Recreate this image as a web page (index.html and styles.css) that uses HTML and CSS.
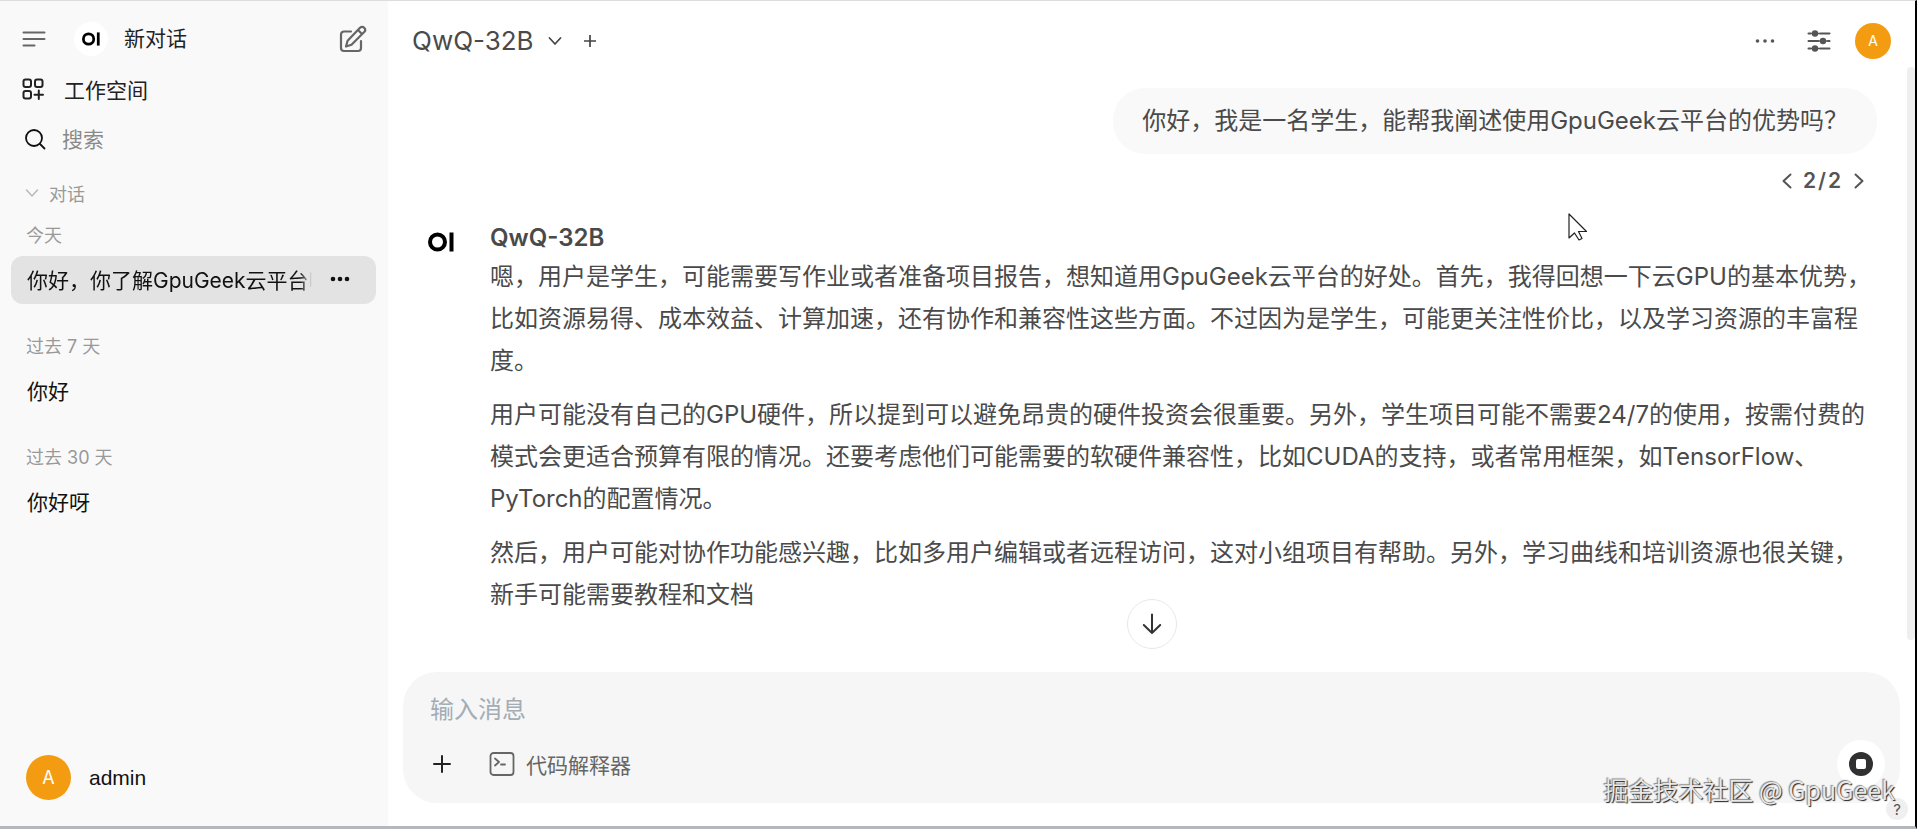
FILE: index.html
```html
<!DOCTYPE html>
<html lang="zh-CN">
<head>
  <meta charset="UTF-8" />
  <meta name="viewport" content="width=device-width, initial-scale=1" />
  <title>QwQ-32B</title>
  <link rel="stylesheet" href="styles.css">
</head>
<body>
  <div class="app">
    <aside class="sidebar">
      <div class="side-top">
        <button class="icon-btn" aria-label="菜单">
          <svg width="24" height="24" viewBox="0 0 24 24" fill="none" stroke="#666" stroke-width="2" stroke-linecap="round"><path d="M1.500 5.500h21M1.500 12h21M1.500 18.500h11"/></svg>
        </button>
        <a class="new-chat" href="#">
          <span class="logo-round">
            <svg width="18" height="14" viewBox="0 0 26 20" fill="none" stroke="#000" stroke-width="4"><circle cx="9.500" cy="10" r="7.500"/><path d="M23.500 0.500v19"/></svg>
          </span>
          <span>新对话</span>
        </a>
        <button class="icon-btn" aria-label="编辑">
          <svg width="28" height="28" viewBox="0 0 28 28" fill="none" stroke="#666" stroke-width="2.200" stroke-linecap="round" stroke-linejoin="round"><path d="M12 6.500H5a3 3 0 0 0-3 3V23a3 3 0 0 0 3 3h14a3 3 0 0 0 3-3v-7"/><path d="M21 2.800a2.900 2.900 0 0 1 4.200 4.200L12.500 19.700 7 21.500l1.600-5.800zM19 5l4 4"/></svg>
        </button>
      </div>

      <a class="side-row" href="#">
        <svg width="22" height="22" viewBox="0 0 22 22" fill="none" stroke="#222" stroke-width="2" stroke-linecap="round"><rect x="1.500" y="1.500" width="7.500" height="7.500" rx="2"/><rect x="13" y="1.500" width="7.500" height="7.500" rx="2"/><rect x="1.500" y="13" width="7.500" height="7.500" rx="2"/><path d="M16.800 12.500v8.500M12.500 16.800h8.500"/></svg>
        <span>工作空间</span>
      </a>
      <label class="side-row search">
        <svg width="22" height="22" viewBox="0 0 22 22" fill="none" stroke="#111" stroke-width="1.800" stroke-linecap="round"><circle cx="10" cy="10" r="8"/><path d="M16 16l4.500 4.500"/></svg>
        <input type="text" placeholder="搜索" aria-label="搜索">
      </label>

      <button class="folder">
        <svg width="14" height="14" viewBox="0 0 14 14" fill="none" stroke="#bbb" stroke-width="1.600" stroke-linecap="round" stroke-linejoin="round"><path d="M1.500 4L7 10l5.500-6"/></svg>
        <span>对话</span>
      </button>

      <nav class="history">
        <section>
          <h3>今天</h3>
          <div class="chat-item active">
            <a href="#">你好，你了解GpuGeek云平台吗</a>
            <button class="icon-btn" aria-label="更多">
              <svg width="20" height="20" viewBox="0 0 20 20" fill="#111"><circle cx="3" cy="10" r="2.300"/><circle cx="10" cy="10" r="2.300"/><circle cx="17" cy="10" r="2.300"/></svg>
            </button>
          </div>
        </section>
        <section>
          <h3>过去 7 天</h3>
          <div class="chat-item"><a href="#">你好</a></div>
        </section>
        <section>
          <h3>过去 30 天</h3>
          <div class="chat-item"><a href="#">你好呀</a></div>
        </section>
      </nav>

      <button class="user">
        <span class="avatar avatar-lg">A</span>
        <span>admin</span>
      </button>
    </aside>

    <main class="main">
      <header class="topbar">
        <button class="model">
          <span>QwQ-32B</span>
          <svg width="14" height="14" viewBox="0 0 14 14" fill="none" stroke="#444" stroke-width="1.700" stroke-linecap="round" stroke-linejoin="round"><path d="M1.500 4L7 10l5.500-6"/></svg>
        </button>
        <button class="icon-btn" aria-label="添加模型">
          <svg width="14" height="14" viewBox="0 0 14 14" stroke="#444" stroke-width="1.700"><path d="M7 1v12M1 7h12"/></svg>
        </button>
        <div class="actions">
          <button class="icon-btn" aria-label="更多">
            <svg width="20" height="20" viewBox="0 0 20 20" fill="#555"><circle cx="2.500" cy="10" r="1.800"/><circle cx="10" cy="10" r="1.800"/><circle cx="17.500" cy="10" r="1.800"/></svg>
          </button>
          <button class="icon-btn" aria-label="对话设置">
            <svg width="24" height="24" viewBox="0 0 24 24" fill="#555" stroke="#555" stroke-width="2" stroke-linecap="round"><path d="M1.500 4.500h2M13.500 4.500h9M1.500 12h9.500M21 12h1.500M1.500 19.500h2M13.500 19.500h9"/><path d="M4 4.500h9M11 12h10M4 19.500h9" stroke-width="1.400"/><circle cx="8" cy="4.500" r="2.200"/><circle cx="16" cy="12" r="2.200"/><circle cx="8" cy="19.500" r="2.200"/></svg>
          </button>
          <button class="avatar" aria-label="用户菜单">A</button>
        </div>
      </header>

      <div class="messages">
        <div class="user-msg">你好，我是一名学生，能帮我阐述使用GpuGeek云平台的优势吗？</div>
        <div class="pager">
          <button class="icon-btn" aria-label="上一条">
            <svg width="12" height="18" viewBox="0 0 12 18" fill="none" stroke="#555" stroke-width="2" stroke-linecap="round" stroke-linejoin="round"><path d="M9.500 2.500L2.500 9l7 6.500"/></svg>
          </button>
          <span>2/2</span>
          <button class="icon-btn" aria-label="下一条">
            <svg width="12" height="18" viewBox="0 0 12 18" fill="none" stroke="#555" stroke-width="2" stroke-linecap="round" stroke-linejoin="round"><path d="M2.500 2.500l7 6.500-7 6.500"/></svg>
          </button>
        </div>

        <article class="bot-msg">
          <svg class="bot-logo" width="26" height="20" viewBox="0 0 26 20" fill="none" stroke="#000" stroke-width="4"><circle cx="9.500" cy="10" r="7.500"/><path d="M23.500 0.500v19"/></svg>
          <div class="bot-body">
            <h2>QwQ-32B</h2>
            <p>嗯，用户是学生，可能需要写作业或者准备项目报告，想知道用GpuGeek云平台的好处。首先，我得回想一下云GPU的基本优势，比如资源易得、成本效益、计算加速，还有协作和兼容性这些方面。不过因为是学生，可能更关注性价比，以及学习资源的丰富程度。</p>
            <p>用户可能没有自己的GPU硬件，所以提到可以避免昂贵的硬件投资会很重要。另外，学生项目可能不需要24/7的使用，按需付费的模式会更适合预算有限的情况。还要考虑他们可能需要的软硬件兼容性，比如CUDA的支持，或者常用框架，如TensorFlow、PyTorch的配置情况。</p>
            <p>然后，用户可能对协作功能感兴趣，比如多用户编辑或者远程访问，这对小组项目有帮助。另外，学习曲线和培训资源也很关键，新手可能需要教程和文档</p>
          </div>
        </article>
      </div>

      <form class="composer">
        <button type="button" class="to-bottom" aria-label="滚动到底部">
          <svg width="20" height="22" viewBox="0 0 20 22" fill="none" stroke="#333" stroke-width="2" stroke-linecap="round" stroke-linejoin="round"><path d="M10 1.500v18.500M1.800 12L10 20l8.200-8"/></svg>
        </button>
        <textarea rows="1" placeholder="输入消息" aria-label="输入消息"></textarea>
        <div class="tools">
          <button type="button" class="icon-btn" aria-label="添加">
            <svg width="24" height="24" viewBox="0 0 24 24" stroke="#222" stroke-width="2" stroke-linecap="round"><path d="M12 4v16M4 12h16"/></svg>
          </button>
          <button type="button" class="code-btn">
            <svg width="26" height="26" viewBox="0 0 26 26" fill="none" stroke="#666" stroke-width="1.800" stroke-linecap="round" stroke-linejoin="round"><rect x="1.500" y="2" width="23" height="22" rx="3"/><path d="M6 7.500l4 3.500-4 3.500M12 13.500h4"/></svg>
            <span>代码解释器</span>
          </button>
          <button type="button" class="stop" aria-label="停止">
            <svg width="24" height="24" viewBox="0 0 24 24"><circle cx="12" cy="12" r="12" fill="#303030"/><rect x="7" y="7" width="10" height="10" rx="2" fill="#fff"/></svg>
          </button>
        </div>
      </form>

      <div class="scroll-thumb"></div>
      <button class="help" aria-label="帮助">?</button>
    </main>

    <div class="watermark">掘金技术社区 @ GpuGeek</div>
    <svg class="cursor" width="20" height="28" viewBox="0 0 20 28" fill="#fff" stroke="#222" stroke-width="1.200" stroke-linejoin="round"><path d="M1 1v24l5.500-5 4.500 7 3-1.500-3.500-7H18.500z"/></svg>
  </div>
</body>
</html>
```
FILE: styles.css
```css
* {
  box-sizing: border-box;
}
body {
  margin: 0;
  font-family: Inter, "Noto Sans CJK SC", sans-serif;
  font-size: 21px;
  color: #222;
  background: #fff;
  text-spacing-trim: space-all;
}
h2, h3, p {
  margin: 0;
}
a {
  color: inherit;
  text-decoration: none;
}
button, input, textarea {
  font: inherit;
  color: inherit;
  background: none;
  border: none;
  padding: 0;
  outline: none;
}
button {
  display: flex;
  align-items: center;
  cursor: pointer;
}
svg {
  display: block;
  flex-shrink: 0;
}
.app {
  position: relative;
  display: flex;
  min-height: 100vh;
  border-top: 1px solid #ddd;
  border-right: 2px solid #000;
  border-bottom: 3px solid #b3b8be;
}

/* sidebar */
.sidebar {
  width: 388px;
  flex-shrink: 0;
  display: flex;
  flex-direction: column;
  padding: 13px 12px 26px 11px;
  background: #f9f9f9;
}
.side-top {
  display: flex;
  align-items: center;
  height: 50px;
  padding: 0 9px 0 11px;
}
.new-chat {
  flex: 1;
  display: flex;
  align-items: center;
  gap: 16px;
  margin-left: 28px;
  line-height: 30px;
}
.logo-round {
  display: flex;
  align-items: center;
  justify-content: center;
  width: 34px;
  height: 34px;
  border-radius: 50%;
  background: #fff;
}
.side-row {
  display: flex;
  align-items: center;
  gap: 20px;
  height: 50px;
  padding: 0 11px;
}
.search {
  gap: 16px;
  padding-left: 13px;
}
.search input {
  flex: 1;
  min-width: 0;
}
.search input::placeholder {
  color: #8a8a8a;
  opacity: 1;
}
.folder {
  gap: 10px;
  height: 40px;
  margin-top: 9px;
  padding-left: 14px;
  font-size: 18px;
  color: #999;
}
.history {
  flex: 1;
  display: flex;
  flex-direction: column;
  gap: 22px;
  margin-top: 2px;
}
.history h3 {
  padding-left: 15px;
  font-size: 18px;
  font-weight: 400;
  line-height: 41px;
  color: #999;
}
.chat-item {
  display: flex;
  align-items: center;
  height: 48px;
  padding: 0 26px 2px 16px;
  border-radius: 12px;
  color: #111;
}
.chat-item a {
  flex: 1;
  overflow: hidden;
  white-space: nowrap;
}
.chat-item .icon-btn {
  margin-left: 18px;
}
.active {
  background: #e3e3e3;
}
/* long titles fade out before the menu button */
.active a {
  -webkit-mask-image: linear-gradient(to left, transparent, #000 12px);
  mask-image: linear-gradient(to left, transparent, #000 12px);
}
.user {
  gap: 18px;
  padding-left: 15px;
  font-family: "Liberation Sans", Arial, sans-serif;
  color: #111;
}
.avatar {
  display: flex;
  align-items: center;
  justify-content: center;
  width: 36px;
  height: 36px;
  border-radius: 50%;
  background: #f39c12;
  color: #fff;
  font-family: Inter, sans-serif;
  font-size: 14px;
}
.avatar-lg {
  width: 45px;
  height: 45px;
  font-size: 18px;
}

/* chat area */
.main {
  position: relative;
  flex: 1;
  min-width: 0;
  display: flex;
  flex-direction: column;
  color: #4a4a4a;
}
.topbar {
  display: flex;
  align-items: center;
  gap: 21px;
  height: 79px;
  padding: 0 24px;
}
.model {
  gap: 14px;
  font-size: 26px;
}
.actions {
  display: flex;
  align-items: center;
  gap: 32px;
  margin-left: auto;
}
.actions .avatar {
  margin-left: -8px;
}
.messages {
  flex: 1;
  display: flex;
  flex-direction: column;
  padding: 8px 38px 0 40px;
  font-size: 24px;
  line-height: 42px;
}
.user-msg {
  align-self: flex-end;
  padding: 12px 29px;
  border-radius: 32px;
  background: #f9f9f9;
}
.pager {
  align-self: flex-end;
  display: flex;
  align-items: center;
  gap: 10px;
  height: 54px;
  padding-right: 12px;
  font-size: 21px;
  font-weight: 600;
  letter-spacing: 2px;
  color: #555;
}
.bot-msg {
  display: flex;
  gap: 36px;
  margin-top: 14px;
}
.bot-logo {
  margin-top: 10px;
}
.bot-body {
  flex: 1;
  min-width: 0;
}
.bot-body h2 {
  margin-bottom: 2px;
  font-size: 24px;
  font-weight: 600;
  line-height: 32px;
}
.bot-body p {
  margin-bottom: 12px;
}
.composer {
  position: relative;
  margin: 0 15px 23px;
  padding: 17px 15px 15px 27px;
  border-radius: 34px;
  background: #f6f6f6;
}
.composer textarea {
  display: block;
  width: 100%;
  height: 42px;
  font-size: 24px;
  line-height: 42px;
  resize: none;
}
.composer textarea::placeholder {
  color: #a3adb5;
  opacity: 1;
}
.tools {
  display: flex;
  align-items: center;
  gap: 35px;
  height: 48px;
  margin-top: 9px;
}
.code-btn {
  gap: 11px;
  color: #666;
}
.stop {
  justify-content: center;
  width: 48px;
  height: 48px;
  margin-left: auto;
  border-radius: 50%;
  background: #fff;
}
.to-bottom {
  position: absolute;
  top: -73px;
  left: 50%;
  transform: translateX(-50%);
  justify-content: center;
  width: 50px;
  height: 50px;
  border: 1px solid #e8e8e8;
  border-radius: 50%;
  background: #fff;
}
.scroll-thumb {
  position: absolute;
  top: 66px;
  right: 0;
  bottom: 186px;
  width: 8px;
  border-radius: 4px;
  background: #efefef;
}
.help {
  position: absolute;
  right: 7px;
  bottom: 6px;
  justify-content: center;
  width: 22px;
  height: 22px;
  border-radius: 50%;
  background: #f0f0f0;
  font-size: 15px;
  color: #555;
}

/* floating over the whole window */
.watermark {
  position: absolute;
  right: 20px;
  bottom: 19px;
  font-family: "Noto Sans CJK SC", sans-serif;
  font-size: 25px;
  line-height: 36px;
  color: #e8e8e8;
  text-shadow: 1px 1px 1px #222, -1px -1px 1px #888;
  pointer-events: none;
}
.cursor {
  position: absolute;
  top: 212px;
  left: 1568px;
}
```
